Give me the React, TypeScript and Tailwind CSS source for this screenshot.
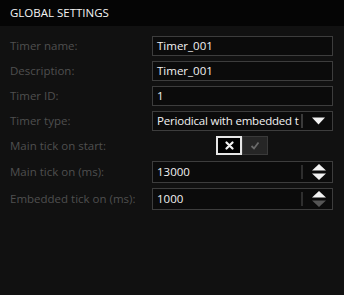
import React from 'react';

const labelCls = 'w-[142px] shrink-0 text-[11.5px] text-[#4f4f4f]';
const boxCls = 'flex items-center w-[181px] bg-[#0b0b0b] border border-[#3d3d3d] text-[11.5px] text-[#f2f2f2]';

function TextRow({ label, value }: { label: string; value: string }) {
  return (
    <div className="flex items-center h-[20px]">
      <span className={labelCls}>{label}</span>
      <div className={`${boxCls} h-[20px] pl-[4px]`}>{value}</div>
    </div>
  );
}

function SpinRow({ label, value, downDisabled }: { label: string; value: string; downDisabled?: boolean }) {
  return (
    <div className="flex items-center h-[22px]">
      <span className={labelCls}>{label}</span>
      <div className={`${boxCls} h-[22px] pl-[4px]`}>
        <span className="flex-1">{value}</span>
        <div className="w-[2px] h-[14px] bg-[#2e2e2e] mr-[8px]" />
        <svg width="16" height="18" viewBox="0 0 16 18" className="mr-[5px]">
          <polygon points="1,7.5 8,1 15,7.5" fill="#f2f2f2" />
          <polygon points="1,10.5 15,10.5 8,17" fill={downDisabled ? '#555555' : '#f2f2f2'} />
        </svg>
      </div>
    </div>
  );
}

export default function App() {
  return (
    <div className="w-[344px] h-[295px] bg-[#111111] flex flex-col" style={{ fontFamily: '"Open Sans", "Noto Sans", sans-serif' }}>
      {/* Header */}
      <div className="h-[26px] bg-[#050505] flex items-center pl-[10px] text-[11.5px] text-[#f4f4f4]">
        GLOBAL SETTINGS
      </div>

      <div className="flex flex-col pl-[10px] pt-[10px]">
        <div className="flex flex-col gap-[5px]">
          <TextRow label="Timer name:" value="Timer_001" />
          <TextRow label="Description:" value="Timer_001" />
          <TextRow label="Timer ID:" value="1" />
          <div className="flex items-center h-[20px]">
            <span className={labelCls}>Timer type:</span>
            <div className={`${boxCls} h-[20px] pl-[4px]`}>
              <span className="flex-1 whitespace-nowrap tracking-[-0.2px]">Periodical with embedded t</span>
              <div className="w-[2px] h-[14px] bg-[#3a3a3a] ml-[2px] mr-[9px]" />
              <svg width="13" height="8" viewBox="0 0 13 8" className="mr-[7px]">
                <polygon points="0,0.5 13,0.5 6.5,7.5" fill="#f2f2f2" />
              </svg>
            </div>
          </div>
        </div>

        {/* Toggle */}
        <div className="flex items-center h-[19px] mt-[5px]">
          <span className={labelCls}>Main tick on start:</span>
          <div className="flex ml-[64px] h-[19px]">
            <div className="w-[26px] h-[19px] border-2 border-[#e6e6e6] bg-black flex items-center justify-center">
              <svg width="9" height="9" viewBox="0 0 9 9">
                <path d="M1.5 1.5 L7.5 7.5 M7.5 1.5 L1.5 7.5" stroke="#f2f2f2" strokeWidth="2.2" strokeLinecap="round" />
              </svg>
            </div>
            <div className="w-[26px] h-[19px] border border-[#3a3a3a] bg-[#262626] flex items-center justify-center">
              <svg width="10" height="9" viewBox="0 0 10 9">
                <path d="M1.5 5 L4 7.5 L8.5 1.5" stroke="#6a6a6a" strokeWidth="1.8" fill="none" />
              </svg>
            </div>
          </div>
        </div>

        <div className="flex flex-col gap-[5px] mt-[6px]">
          <SpinRow label="Main tick on (ms):" value="13000" />
          <SpinRow label="Embedded tick on (ms):" value="1000" downDisabled />
        </div>
      </div>
    </div>
  );
}
